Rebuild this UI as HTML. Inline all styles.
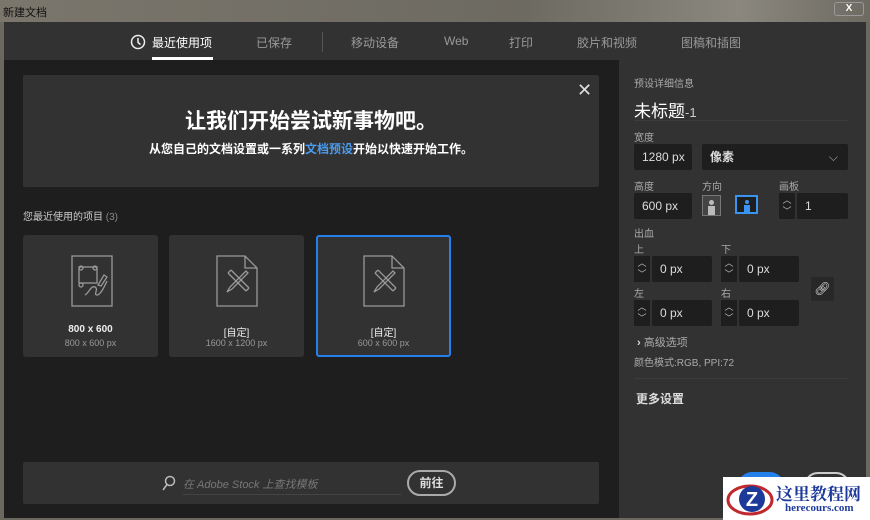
<!DOCTYPE html>
<html><head><meta charset="utf-8"><style>
*{margin:0;padding:0;box-sizing:border-box}
body{width:870px;height:520px;overflow:hidden;background:#6b6860;font-family:"Liberation Sans","Noto Sans CJK SC",sans-serif;position:relative}
.abs{position:absolute}
.t{color:#ddd;white-space:nowrap}
.inp{position:absolute;background:#1e1e1e;border-radius:2px;color:#ddd;font-size:12px;line-height:26px;padding-left:8px}
.lbl{position:absolute;color:#aaa;font-size:10px}
.sp{position:absolute;background:#1e1e1e;width:16px;height:26px;color:#bbb;font-size:9px;text-align:center;line-height:11px;padding-top:2px}
.card{position:absolute;top:235px;width:135px;height:122px;background:#323232;border-radius:3px;text-align:center}
.nav{position:absolute;top:34px;font-size:12px;color:#999;white-space:nowrap}
</style></head><body>
<div class="abs" style="left:0;top:0;width:870px;height:22px;background:linear-gradient(90deg,#7a766c,#6d6a62 60%,#8a877e 85%,#6d6a62)"></div>
<div class="abs t" style="left:3px;top:4px;font-size:11px;color:#111">新建文档</div>
<div class="abs" style="left:834px;top:2px;width:30px;height:14px;border:1px solid #999;border-radius:3px;color:#fff;font-size:10px;text-align:center;line-height:12px;font-weight:bold">X</div>
<div class="abs" style="left:4px;top:22px;width:862px;height:496px;background:#1e1e1e"></div>
<div class="abs" style="left:4px;top:22px;width:862px;height:38px;background:#323232"></div>
<svg class="abs" style="left:130px;top:34px" width="16" height="16" viewBox="0 0 16 16"><circle cx="8" cy="8" r="6.5" fill="none" stroke="#eee" stroke-width="1.5"/><path d="M8 4v4.5l2.5 2" fill="none" stroke="#eee" stroke-width="1.5"/></svg>
<div class="nav" style="left:152px;color:#fff">最近使用项</div>
<div class="abs" style="left:152px;top:57px;width:61px;height:3px;background:#fff"></div>
<div class="nav" style="left:256px">已保存</div>
<div class="abs" style="left:322px;top:32px;width:1px;height:20px;background:#555"></div>
<div class="nav" style="left:351px">移动设备</div>
<div class="nav" style="left:444px">Web</div>
<div class="nav" style="left:509px">打印</div>
<div class="nav" style="left:577px">胶片和视频</div>
<div class="nav" style="left:681px">图稿和插图</div>
<div class="abs" style="left:619px;top:60px;width:247px;height:458px;background:#323232"></div>
<div class="abs" style="left:23px;top:75px;width:576px;height:112px;background:#323232;border-radius:2px"></div>
<div class="abs t" style="left:577px;top:80px;font-size:18px;color:#ddd">✕</div>
<div class="abs t" style="left:23px;top:105px;width:576px;text-align:center;font-size:21px;color:#fff;font-weight:bold">让我们开始尝试新事物吧。</div>
<div class="abs t" style="left:23px;top:140px;width:576px;text-align:center;font-size:12px;color:#fff;font-weight:bold">从您自己的文档设置或一系列<span style="color:#4a9cf0">文档预设</span>开始以快速开始工作。</div>
<div class="abs t" style="left:23px;top:208px;font-size:10px;color:#ccc">您最近使用的项目 <span style="color:#888">(3)</span></div>
<div class="card" style="left:23px">
<svg class="abs" style="left:48px;top:20px" width="42" height="52" viewBox="0 0 42 52" fill="none" stroke="#999" stroke-width="1.3"><rect x="1" y="1" width="40" height="50"/><rect x="8" y="12" width="18" height="16"/><circle cx="10" cy="13" r="2"/><circle cx="24" cy="13" r="2"/><circle cx="10" cy="30" r="2"/><path d="M14 40c4-2 6-10 10-8s-2 8 2 8 8-10 10-14"/><path d="M33 20l3 2-6 9-3-1z"/></svg>
<div class="abs t" style="left:0;width:135px;top:89px;font-size:10px;color:#eee;font-weight:bold">800 x 600</div>
<div class="abs t" style="left:0;width:135px;top:103px;font-size:9px;color:#999">800 x 600 px</div></div>
<div class="card" style="left:169px">
<svg class="abs" style="left:47px;top:20px" width="42" height="52" viewBox="0 0 42 52" fill="none" stroke="#999" stroke-width="1.3"><path d="M1 1h28l12 12v38H1z M29 1v12h12"/><path d="M12 18l18 18M15 15l18 18M12 18l3-3M30 36l3-3"/><path d="M30 16l-16 16-3 5 5-3 16-16z"/></svg>
<div class="abs t" style="left:0;width:135px;top:89px;font-size:10px;color:#eee">[自定]</div>
<div class="abs t" style="left:0;width:135px;top:103px;font-size:9px;color:#999">1600 x 1200 px</div></div>
<div class="card" style="left:316px;border:2px solid #2680eb">
<svg class="abs" style="left:45px;top:18px" width="42" height="52" viewBox="0 0 42 52" fill="none" stroke="#999" stroke-width="1.3"><path d="M1 1h28l12 12v38H1z M29 1v12h12"/><path d="M12 18l18 18M15 15l18 18M12 18l3-3M30 36l3-3"/><path d="M30 16l-16 16-3 5 5-3 16-16z"/></svg>
<div class="abs t" style="left:0;width:131px;top:87px;font-size:10px;color:#eee">[自定]</div>
<div class="abs t" style="left:0;width:131px;top:101px;font-size:9px;color:#999">600 x 600 px</div></div>
<div class="abs" style="left:23px;top:462px;width:576px;height:42px;background:#323232;border-radius:2px"></div>
<svg class="abs" style="left:162px;top:475px" width="14" height="16" viewBox="0 0 14 16" fill="none" stroke="#bbb" stroke-width="1.5"><circle cx="8" cy="6" r="4.5"/><path d="M5 9.5L1 15"/></svg>
<div class="abs t" style="left:183px;top:476px;font-size:11px;color:#777;font-style:italic">在 Adobe Stock 上查找模板</div>
<div class="abs" style="left:183px;top:494px;width:218px;height:1px;background:#444"></div>
<div class="abs" style="left:407px;top:470px;width:49px;height:26px;border:2px solid #aaa;border-radius:13px;color:#ddd;font-size:12px;text-align:center;line-height:22px;font-weight:bold">前往</div>
<div class="lbl" style="left:634px;top:75px">预设详细信息</div>
<div class="abs t" style="left:634px;top:97px;font-size:17px;color:#fff">未标题<span style="font-size:13px;color:#ccc">-1</span></div>
<div class="abs" style="left:634px;top:120px;width:214px;height:1px;background:#3c3c3c"></div>
<div class="lbl" style="left:634px;top:129px">宽度</div>
<div class="inp" style="left:634px;top:144px;width:58px">1280 px</div>
<div class="inp" style="left:702px;top:144px;width:146px;font-weight:bold">像素<span style="position:absolute;right:10px;top:0;color:#aaa;font-weight:normal">⌵</span></div>
<div class="lbl" style="left:634px;top:178px">高度</div>
<div class="lbl" style="left:702px;top:178px">方向</div>
<div class="lbl" style="left:779px;top:178px">画板</div>
<div class="inp" style="left:634px;top:193px;width:58px">600 px</div>
<div class="abs" style="left:702px;top:195px;width:19px;height:21px;border:1px solid #777;background:#444"><div class="abs" style="left:6px;top:4px;width:5px;height:5px;border-radius:50%;background:#bbb"></div><div class="abs" style="left:5px;top:10px;width:7px;height:9px;background:#bbb"></div></div>
<div class="abs" style="left:735px;top:195px;width:23px;height:19px;border:2px solid #3b93f0;background:#1e1e1e"><div class="abs" style="left:8px;top:3px;width:4px;height:4px;border-radius:50%;background:#3b93f0"></div><div class="abs" style="left:7px;top:8px;width:6px;height:7px;background:#3b93f0"></div></div>
<div class="sp" style="left:779px;top:193px">︿<br>﹀</div>
<div class="inp" style="left:797px;top:193px;width:51px">1</div>
<div class="lbl" style="left:634px;top:225px">出血</div>
<div class="lbl" style="left:634px;top:241px">上</div>
<div class="lbl" style="left:721px;top:241px">下</div>
<div class="sp" style="left:634px;top:256px">︿<br>﹀</div><div class="inp" style="left:652px;top:256px;width:60px">0 px</div>
<div class="sp" style="left:721px;top:256px">︿<br>﹀</div><div class="inp" style="left:739px;top:256px;width:60px">0 px</div>
<div class="lbl" style="left:634px;top:285px">左</div>
<div class="lbl" style="left:721px;top:285px">右</div>
<div class="sp" style="left:634px;top:300px">︿<br>﹀</div><div class="inp" style="left:652px;top:300px;width:60px">0 px</div>
<div class="sp" style="left:721px;top:300px">︿<br>﹀</div><div class="inp" style="left:739px;top:300px;width:60px">0 px</div>
<div class="abs" style="left:811px;top:277px;width:23px;height:24px;background:#282828;border-radius:2px;color:#ddd;font-size:13px;text-align:center;line-height:24px">🔗︎</div>
<div class="abs t" style="left:637px;top:334px;font-size:11px;color:#aaa"><b style="color:#ddd">›</b> 高级选项</div>
<div class="lbl" style="left:634px;top:354px">颜色模式:RGB, PPI:72</div>
<div class="abs" style="left:634px;top:378px;width:214px;height:1px;background:#3c3c3c"></div>
<div class="abs t" style="left:636px;top:390px;font-size:12px;color:#ddd;font-weight:bold">更多设置</div>
<div class="abs" style="left:738px;top:472px;width:46px;height:28px;border-radius:14px;background:#2680eb"></div>
<div class="abs" style="left:804px;top:472px;width:46px;height:28px;border-radius:14px;border:2px solid #ccc"></div>
<div class="abs" style="left:723px;top:477px;width:147px;height:43px;background:#fff"></div>
<svg class="abs" style="left:725px;top:479px" width="50" height="40" viewBox="0 0 50 40"><ellipse cx="25" cy="21" rx="22" ry="14" fill="none" stroke="#c0282d" stroke-width="3"/><circle cx="27" cy="20" r="13" fill="#1d3a9a"/><text x="27" y="27" font-size="20" font-weight="bold" fill="#fff" text-anchor="middle" font-family="Liberation Sans,sans-serif">Z</text></svg>
<div class="abs t" style="left:776px;top:480px;font-size:17px;color:#1d3a9a;font-weight:bold;font-family:'Liberation Serif','Noto Serif CJK SC',serif">这里教程网</div>
<div class="abs t" style="left:785px;top:502px;font-size:11px;color:#1d3a9a;font-weight:bold;font-family:'Liberation Serif',serif">herecours.com</div>
</body></html>
